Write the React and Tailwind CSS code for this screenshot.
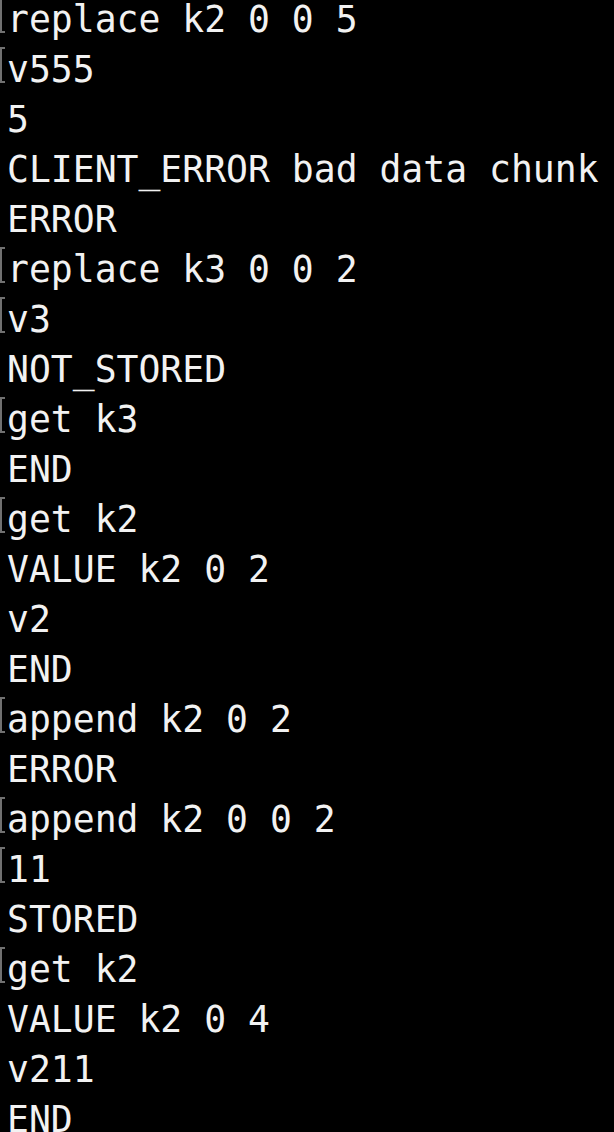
import React from "react";

const lines = [
  ["replace k2 0 0 5", true],
  ["v555", true],
  ["5", false],
  ["CLIENT_ERROR bad data chunk", false],
  ["ERROR", false],
  ["replace k3 0 0 2", true],
  ["v3", true],
  ["NOT_STORED", false],
  ["get k3", true],
  ["END", false],
  ["get k2", true],
  ["VALUE k2 0 2", false],
  ["v2", false],
  ["END", false],
  ["append k2 0 2", true],
  ["ERROR", false],
  ["append k2 0 0 2", true],
  ["11", true],
  ["STORED", false],
  ["get k2", true],
  ["VALUE k2 0 4", false],
  ["v211", false],
  ["END", false],
];

export default function App() {
  return (
    <div className="w-[614px] h-[1132px] bg-black overflow-hidden">
      <div className="-mt-[5px] flex flex-col">
        {lines.map(([t, b], i) => (
          <div key={i} className="flex items-start h-[50px]">
            <div className="w-[7px] shrink-0 pt-[2px]">
              {b && (
                <div className="w-[5px] h-[36px] border-l-2 border-t-2 border-b-2 border-[#707070]" />
              )}
            </div>
            <span
              className="text-[#f2f2f2] whitespace-pre text-[36.4px] leading-[50px] font-medium"
              style={{ fontFamily: '"DejaVu Sans Mono", monospace' }}
            >
              {t}
            </span>
          </div>
        ))}
      </div>
    </div>
  );
}
